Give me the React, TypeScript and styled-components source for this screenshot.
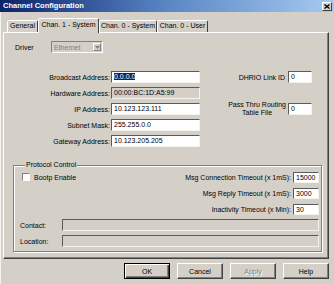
import styled, { createGlobalStyle } from "styled-components";

const GlobalStyle = createGlobalStyle`
  html, body {
    margin: 0;
    padding: 0;
  }
  body {
    background: #d4d0c8;
    font-family: "Liberation Sans", Arial, sans-serif;
    font-size: 7px;
    color: #000;
  }
  * {
    box-sizing: border-box;
  }
`;

const Window = styled.div`
  width: 334px;
  height: 284px;
  display: flex;
  flex-direction: column;
  background: #d4d0c8;
  overflow: hidden;
`;

const TitleBar = styled.div`
  height: 12px;
  flex: none;
  display: flex;
  align-items: center;
  justify-content: space-between;
  padding: 0 2px 0 3px;
  background: linear-gradient(to right, #0a246a 0%, #5a86c4 50%, #a6caf0 100%);
`;

const Title = styled.span`
  color: #fff;
  font-weight: bold;
  font-size: 7.5px;
  line-height: 12px;
  white-space: nowrap;
`;

const CloseButton = styled.div`
  width: 10px;
  height: 9px;
  background: #d4d0c8;
  border: 1px solid;
  border-color: #fff #404040 #404040 #fff;
  display: flex;
  align-items: center;
  justify-content: center;
`;

const Body = styled.div`
  flex: 1;
  display: flex;
  flex-direction: column;
  padding: 6px 5px 0 2px;
  border-left: 1px solid #f4f3ee;
`;

const TabStrip = styled.div`
  display: flex;
  align-items: flex-end;
  height: 14px;
  padding-left: 4px;
`;

const Tab = styled.div<{ $w: number; $active?: boolean }>`
  width: ${p => p.$w}px;
  height: ${p => (p.$active ? 15 : 12)}px;
  margin-bottom: ${p => (p.$active ? -1 : 0)}px;
  position: relative;
  z-index: ${p => (p.$active ? 2 : 0)};
  background: #d4d0c8;
  border: 1px solid;
  border-bottom: none;
  border-color: #fff #404040 transparent #fff;
  border-radius: 2px 2px 0 0;
  text-align: center;
  line-height: ${p => (p.$active ? 12 : 10)}px;
  white-space: nowrap;
`;

const Panel = styled.div`
  flex: 1;
  display: flex;
  flex-direction: column;
  border: 1px solid;
  border-color: #fff #404040 #404040 #fff;
  box-shadow: inset -1px -1px #808080;
`;

const DriverRow = styled.div`
  display: flex;
  align-items: center;
  height: 12px;
  margin: 8px 0 0 11px;
`;

const DriverLabel = styled.span`
  width: 36px;
`;

const Combo = styled.div`
  width: 52px;
  height: 12px;
  display: flex;
  align-items: center;
  justify-content: space-between;
  padding: 0 1px 0 2px;
  border: 1px solid;
  border-color: #808080 #fff #fff #808080;
  color: #808080;
`;

const ComboArrow = styled.div`
  width: 8px;
  height: 8px;
  display: flex;
  align-items: center;
  justify-content: center;
  border: 1px solid;
  border-color: #fff #808080 #808080 #fff;
`;

const AddressSection = styled.div`
  display: flex;
  justify-content: space-between;
  margin-top: 18px;
  padding-right: 16px;
`;

const LeftGrid = styled.div`
  display: grid;
  grid-template-columns: 107px 89px;
  grid-auto-rows: 12px;
  row-gap: 4px;
  align-items: center;
`;

const RightGrid = styled.div`
  display: grid;
  grid-template-columns: auto 24px;
  column-gap: 2px;
  row-gap: 18px;
  align-items: center;
  align-content: start;
`;

const FieldLabel = styled.span`
  text-align: right;
  padding-right: 1px;
  white-space: nowrap;
`;

const StackLabel = styled.span`
  text-align: center;
  line-height: 8px;
`;

const TextBox = styled.div<{ $readOnly?: boolean }>`
  height: 12px;
  border: 1px solid;
  border-color: #5a5a5a #f4f3ee #f4f3ee #5a5a5a;
  background: ${p => (p.$readOnly ? "#d4d0c8" : "#fff")};
  padding-left: 2px;
  line-height: 10px;
  overflow: hidden;
  white-space: nowrap;
`;

const SmallBox = styled(TextBox)`
  height: 11px;
  line-height: 9px;
`;

const Selected = styled.span`
  background: #0a246a;
  color: #fff;
`;

const Group = styled.fieldset`
  margin: 14px 6px 0 9px;
  padding: 0 2px 4px 6px;
  border: 1px solid #808080;
  box-shadow: 1px 1px 0 #fff, inset 1px 1px 0 #fff;
  min-width: 0;
`;

const Legend = styled.legend`
  margin-left: 5px;
  padding: 0 1px;
  background: #d4d0c8;
  line-height: 8px;
`;

const TopBlock = styled.div`
  display: flex;
  justify-content: space-between;
  align-items: flex-start;
  margin-top: 3px;
`;

const CheckRow = styled.label`
  display: flex;
  align-items: center;
  gap: 4px;
  margin: 1px 0 0 2px;
`;

const CheckBox = styled.span`
  width: 8px;
  height: 8px;
  background: #fff;
  border: 1px solid;
  border-color: #808080 #fff #fff #808080;
`;

const TimeoutGrid = styled.div`
  display: grid;
  grid-template-columns: auto 26px;
  column-gap: 1px;
  grid-auto-rows: 11px;
  row-gap: 5px;
  align-items: center;
`;

const ContactGrid = styled.div`
  display: grid;
  grid-template-columns: 42px 1fr;
  grid-auto-rows: 12px;
  row-gap: 4px;
  align-items: center;
  margin-top: 4px;
`;

const ButtonRow = styled.div`
  display: flex;
  justify-content: flex-end;
  gap: 7px;
  padding: 4px 0 5px;
`;

const Button = styled.div<{ $default?: boolean; $disabled?: boolean }>`
  width: 46px;
  height: 16px;
  display: flex;
  align-items: center;
  justify-content: center;
  border: 1px solid;
  border-color: ${p => (p.$default ? "#000" : "#fff #404040 #404040 #fff")};
  box-shadow: ${p =>
    p.$default
      ? "inset 1px 1px #fff, inset -1px -1px #404040, inset -2px -2px #808080"
      : "inset -1px -1px #808080"};
  color: ${p => (p.$disabled ? "#808080" : "#000")};
  text-shadow: ${p => (p.$disabled ? "1px 1px #fff" : "none")};
`;

export default function App() {
  return (
    <>
      <GlobalStyle />
      <Window>
        <TitleBar>
          <Title>Channel Configuration</Title>
          <CloseButton>
            <svg width="6" height="5" viewBox="0 0 6 5">
              <path d="M0.5 0.5 L5.5 4.5 M5.5 0.5 L0.5 4.5" stroke="#000" strokeWidth="1.3" />
            </svg>
          </CloseButton>
        </TitleBar>
        <Body>
          <TabStrip>
            <Tab $w={31}>General</Tab>
            <Tab $w={61} $active>Chan. 1 - System</Tab>
            <Tab $w={58}>Chan. 0 - System</Tab>
            <Tab $w={51}>Chan. 0 - User</Tab>
          </TabStrip>
          <Panel>
            <DriverRow>
              <DriverLabel>Driver</DriverLabel>
              <Combo>
                <span>Ethernet</span>
                <ComboArrow>
                  <svg width="5" height="3" viewBox="0 0 5 3">
                    <path d="M0 0 H5 L2.5 3 Z" fill="#808080" />
                  </svg>
                </ComboArrow>
              </Combo>
            </DriverRow>
            <AddressSection>
              <LeftGrid>
                <FieldLabel>Broadcast Address:</FieldLabel>
                <TextBox>
                  <Selected>0.0.0.0</Selected>
                </TextBox>
                <FieldLabel>Hardware Address:</FieldLabel>
                <TextBox $readOnly>00:00:BC:1D:A5:99</TextBox>
                <FieldLabel>IP Address:</FieldLabel>
                <TextBox>10.123.123.111</TextBox>
                <FieldLabel>Subnet Mask:</FieldLabel>
                <TextBox>255.255.0.0</TextBox>
                <FieldLabel>Gateway Address:</FieldLabel>
                <TextBox>10.123.205.205</TextBox>
              </LeftGrid>
              <RightGrid>
                <FieldLabel>DHRIO Link ID</FieldLabel>
                <TextBox>0</TextBox>
                <StackLabel>
                  Pass Thru Routing
                  <br />
                  Table File
                </StackLabel>
                <TextBox>0</TextBox>
              </RightGrid>
            </AddressSection>
            <Group>
              <Legend>Protocol Control</Legend>
              <TopBlock>
                <CheckRow>
                  <CheckBox />
                  Bootp Enable
                </CheckRow>
                <TimeoutGrid>
                  <FieldLabel>Msg Connection Timeout (x 1mS):</FieldLabel>
                  <SmallBox>15000</SmallBox>
                  <FieldLabel>Msg Reply Timeout (x 1mS):</FieldLabel>
                  <SmallBox>3000</SmallBox>
                  <FieldLabel>Inactivity Timeout (x Min):</FieldLabel>
                  <SmallBox>30</SmallBox>
                </TimeoutGrid>
              </TopBlock>
              <ContactGrid>
                <span>Contact:</span>
                <TextBox $readOnly />
                <span>Location:</span>
                <TextBox $readOnly />
              </ContactGrid>
            </Group>
          </Panel>
          <ButtonRow>
            <Button $default>OK</Button>
            <Button>Cancel</Button>
            <Button $disabled>Apply</Button>
            <Button>Help</Button>
          </ButtonRow>
        </Body>
      </Window>
    </>
  );
}
